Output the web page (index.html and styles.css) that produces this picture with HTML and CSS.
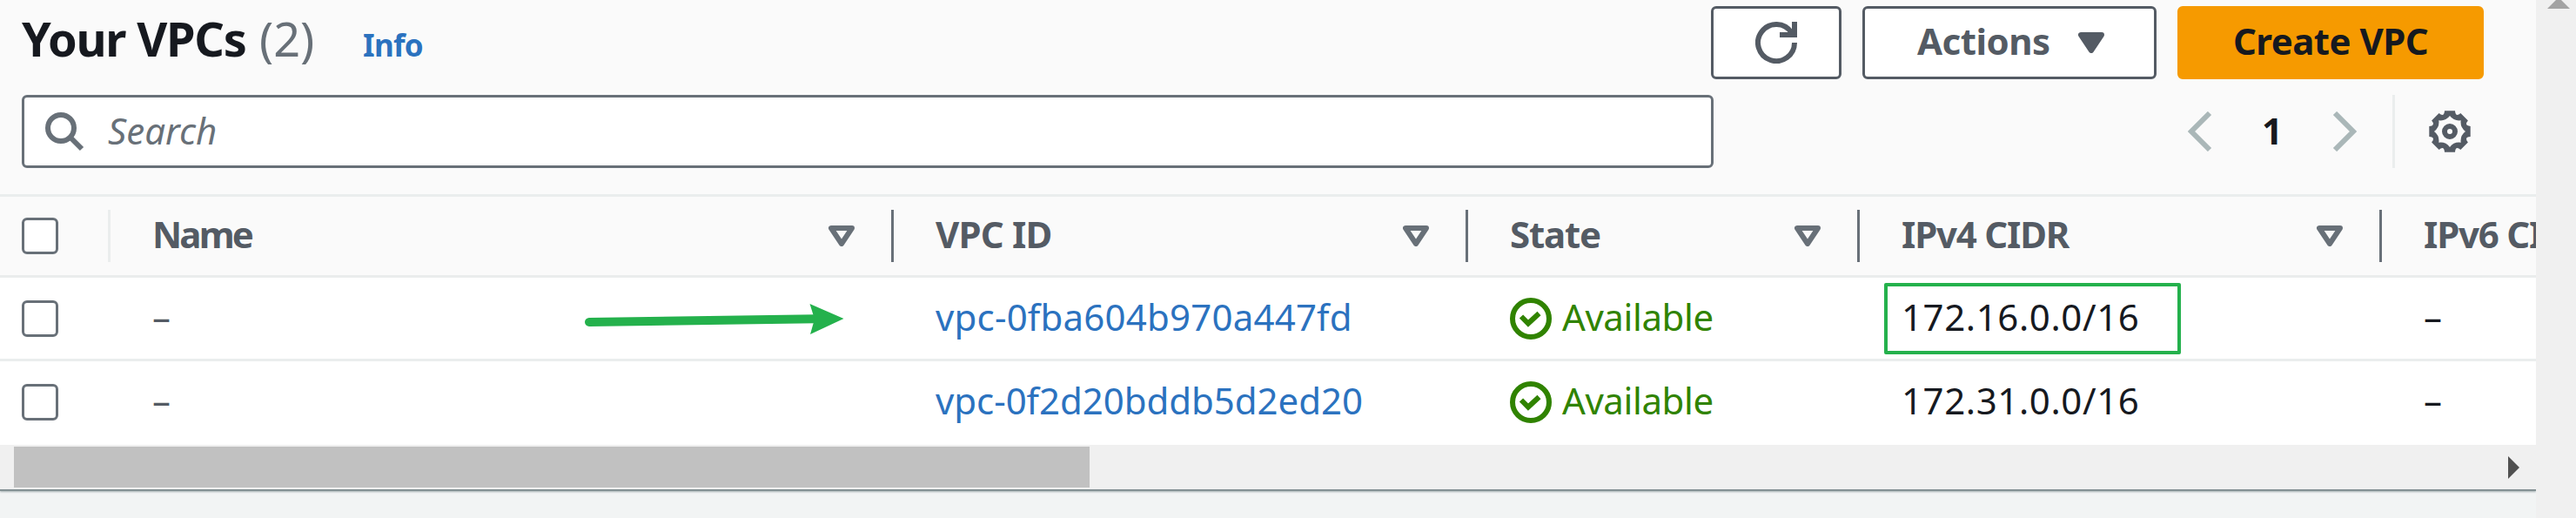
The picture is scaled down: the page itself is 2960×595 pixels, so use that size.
FILE: index.html
```html
<!DOCTYPE html>
<html lang="en">
<head>
<meta charset="utf-8">
<title>Your VPCs</title>
<link rel="stylesheet" href="styles.css">
</head>
<body>
<svg class="defs" width="0" height="0" aria-hidden="true">
  <symbol id="filter" viewBox="0 0 30 24"><path d="M3 3H27L15 21Z" fill="none" stroke="currentColor" stroke-width="6" stroke-linejoin="round"/></symbol>
  <symbol id="ok" viewBox="0 0 48 48"><circle cx="24" cy="24" r="21" fill="none" stroke="currentColor" stroke-width="6"/><path d="M13 21.500 21 29.500 33.500 18" fill="none" stroke="currentColor" stroke-width="6"/></symbol>
</svg>
<div class="page">
  <main class="panel">
    <header class="head">
      <div class="title-row">
        <h1 class="title"><span class="title-name">Your VPCs</span><span class="count">(2)</span></h1>
        <a class="info">Info</a>
        <div class="actions">
          <button class="btn btn-icon" aria-label="Refresh"><svg width="48" height="48" viewBox="0 0 48 48" fill="none" stroke="currentColor" stroke-width="6"><path d="M45 24A21 21 0 1 1 41.500 12.500L43 15"/><path d="M45 0V15H28"/></svg></button>
          <button class="btn btn-menu"><span class="t-actions">Actions</span><svg width="30" height="24" viewBox="0 0 30 24"><path d="M3 3H27L15 21Z" fill="currentColor" stroke="currentColor" stroke-width="6" stroke-linejoin="round"/></svg></button>
          <button class="btn btn-primary"><span class="t-create">Create VPC</span></button>
        </div>
      </div>
      <div class="tool-row">
        <div class="search"><svg width="45" height="46" viewBox="0 0 45 46" fill="none" stroke="currentColor" stroke-width="6"><circle cx="18" cy="19" r="15"/><path d="M29 30 42 43"/></svg><span class="t-search">Search</span></div>
        <nav class="pager">
          <svg class="chev" width="28" height="46" viewBox="0 0 28 46"><path d="M25 2 4 23 25 44" fill="none" stroke="currentColor" stroke-width="6"/></svg>
          <span class="page-no">1</span>
          <svg class="chev" width="28" height="46" viewBox="0 0 28 46"><path d="M3 2 24 23 3 44" fill="none" stroke="currentColor" stroke-width="6"/></svg>
        </nav>
        <div class="settings"><svg width="48" height="48" viewBox="-24 -24 48 48"><circle r="6" fill="none" stroke="currentColor" stroke-width="6"/><path fill="currentColor" fill-rule="evenodd" d="M-6-23.700H6Q6.500-16 12.400-20.900L20.900-12.400Q16-6.500 23.700-6V6Q16 6.500 20.900 12.400L12.400 20.900Q6.500 16 6 23.700H-6Q-6.500 16-12.400 20.900L-20.900 12.400Q-16 6.500-23.700 6V-6Q-16-6.500-20.900-12.400L-12.400-20.900Q-6.500-16-6-23.700ZM0-18Q-4.800-11.600-12.700-12.700-11.600-4.800-18 0-11.600 4.800-12.700 12.700-4.800 11.600 0 18 4.800 11.600 12.700 12.700 11.600 4.800 18 0 11.600-4.800 12.700-12.700 4.800-11.600 0-18Z"/></svg></div>
      </div>
    </header>
    <section class="table">
      <div class="row row-head">
        <div class="cell cell-check"><span class="box"></span></div>
        <div class="cell"><span class="t-name">Name</span><svg class="filter"><use href="#filter"/></svg></div>
        <div class="cell"><span class="t-vpc">VPC ID</span><svg class="filter"><use href="#filter"/></svg></div>
        <div class="cell"><span class="t-state">State</span><svg class="filter"><use href="#filter"/></svg></div>
        <div class="cell"><span class="t-ip">IPv4 CIDR</span><svg class="filter"><use href="#filter"/></svg></div>
        <div class="cell"><span class="t-ip">IPv6 CIDR</span></div>
      </div>
      <div class="row">
        <div class="cell cell-check"><span class="box"></span></div>
        <div class="cell muted"><span>–</span></div>
        <div class="cell"><a class="link id-a">vpc-0fba604b970a447fd</a></div>
        <div class="cell ok"><svg width="48" height="48"><use href="#ok"/></svg><span class="t-avail">Available</span></div>
        <div class="cell"><span class="cidr">172.16.0.0/16</span></div>
        <div class="cell"><span>–</span></div>
      </div>
      <div class="row">
        <div class="cell cell-check"><span class="box"></span></div>
        <div class="cell muted"><span>–</span></div>
        <div class="cell"><a class="link id-b">vpc-0f2d20bddb5d2ed20</a></div>
        <div class="cell ok"><svg width="48" height="48"><use href="#ok"/></svg><span class="t-avail">Available</span></div>
        <div class="cell"><span class="cidr">172.31.0.0/16</span></div>
        <div class="cell"><span>–</span></div>
      </div>
      <svg class="arrow" width="300" height="40" viewBox="670 347 300 40"><path d="M677 370 938 366.300" stroke="#24b14c" stroke-width="10" stroke-linecap="round"/><path d="M930.500 349 969.500 366 931 384 936 366.500Z" fill="#24b14c"/></svg>
      <div class="highlight"></div>
    </section>
    <div class="hscroll"><div class="thumb"></div><svg width="13" height="26" viewBox="0 0 13 26"><path d="M0 0 13 13 0 26Z" fill="#505050"/></svg></div>
  </main>
  <aside class="vscroll"><svg width="26" height="13" viewBox="0 0 26 13"><path d="M13 0 26 13H0Z" fill="#a3a3a3"/></svg></aside>
</div>
</body>
</html>
```
FILE: styles.css
```css
* { box-sizing: border-box; }
body { margin: 0; background: #f2f4f4; color: #16191f; font: 42px/60px "Noto Sans", "Open Sans", sans-serif; overflow: hidden; }
svg { display: block; flex: none; }
.defs { position: absolute; }
.page { display: flex; width: 2960px; height: 595px; overflow: hidden; }
.panel { width: 2914px; height: 562px; overflow: hidden; box-shadow: 0 2px 0 #849194, 0 3px 2px #a3adb0; }
.head { height: 226px; padding: 7px 60px 0 25px; background: #fafafa; border-bottom: 3px solid #eaeded; }
.title-row { display: flex; height: 84px; }
.title { display: flex; margin: 0; font-size: 54px; line-height: 74px; font-weight: 700; white-space: pre; }
.title-name { width: 273px; letter-spacing: -1.2px; }
.count { width: 119px; color: #687078; font-weight: 400; }
.info { padding-top: 8px; color: #2b72bf; font-size: 35px; line-height: 73px; font-weight: 700; letter-spacing: -0.7px; }
.actions { display: flex; gap: 24px; margin-left: auto; }
.btn { display: flex; align-items: center; justify-content: center; height: 84px; padding: 0; border: 3px solid #545b64; border-radius: 6px; background: #fff; color: #545b64; font: 700 42px/60px "Noto Sans", "Open Sans", sans-serif; white-space: nowrap; }
.btn span { margin-bottom: 4px; }
.btn-icon { width: 150px; }
.btn-menu { width: 338px; justify-content: flex-start; padding-left: 60px; }
.btn-menu svg { margin-left: auto; margin-right: 57px; }
.btn-primary { width: 352px; border-color: #f69a00; background: #f69a00; color: #16191f; }
.t-actions { letter-spacing: -0.5px; }
.t-create { letter-spacing: -0.55px; }
.tool-row { display: flex; align-items: center; height: 84px; margin-top: 18px; }
.search { display: flex; align-items: center; width: 1944px; height: 84px; padding-left: 24px; border: 3px solid #687078; border-radius: 6px; background: #fff; color: #687078; font-style: italic; }
.t-search { margin: 0 0 3px 27px; }
.pager { display: flex; align-items: center; margin-left: 545px; }
.chev { color: #aab7b8; }
.page-no { width: 138px; padding-bottom: 3px; font-weight: 700; text-align: center; }
.settings { display: flex; align-items: center; height: 84px; margin-left: 41px; padding-left: 39px; border-left: 3px solid #eaeded; color: #545b64; }
.table { position: relative; height: 285px; background: #fff; }
.row { display: grid; grid-template-columns: 127px 900px 660px 450px 600px 177px; height: 96px; border-bottom: 3px solid #eaeded; }
.row-head { height: 93px; background: #fafafa; color: #545b64; font-weight: 700; }
.row:nth-child(3) { border-bottom-color: transparent; }
.cell { display: flex; align-items: center; padding-left: 48px; white-space: nowrap; }
.cell > span:not(.box), .cell > a { margin-bottom: 4px; }
.row .cell-check { padding-left: 25px; }
.row-head .cell { height: 60px; margin-top: 15px; border-right: 3px solid #687078; }
.row-head .cell-check { border-right-color: #eaeded; }
.row-head .cell:last-child { border-right: 0; overflow: hidden; }
.box { width: 42px; height: 42px; border: 3px solid #687078; border-radius: 6px; background: #fff; }
.filter { width: 30px; height: 24px; margin-left: auto; margin-right: 42px; color: #687078; }
.muted { color: #545b64; }
.link { color: #2b72bf; }
.id-a { letter-spacing: 0.2px; }
.id-b { letter-spacing: -0.05px; }
.t-name { letter-spacing: -2.8px; }
.t-vpc { letter-spacing: -0.8px; }
.t-state { letter-spacing: -1.2px; }
.t-ip { letter-spacing: -1.2px; }
.t-avail { letter-spacing: -0.4px; }
.cidr { letter-spacing: 0.6px; }
.ok { color: #308300; gap: 12px; }
.arrow { position: absolute; left: 670px; top: 121px; }
.highlight { position: absolute; left: 2165px; top: 99px; width: 341px; height: 82px; border: 4px solid #24b14c; border-radius: 2px; }
.hscroll { display: flex; align-items: center; height: 51px; padding-left: 16px; background: #f0f0f0; }
.thumb { width: 1236px; height: 47px; background: #c1c1c1; }
.hscroll svg { margin-left: auto; margin-right: 19px; }
.vscroll { width: 46px; background: #f0f0f0; }
.vscroll svg { margin: -3px 0 0 13px; }
```
